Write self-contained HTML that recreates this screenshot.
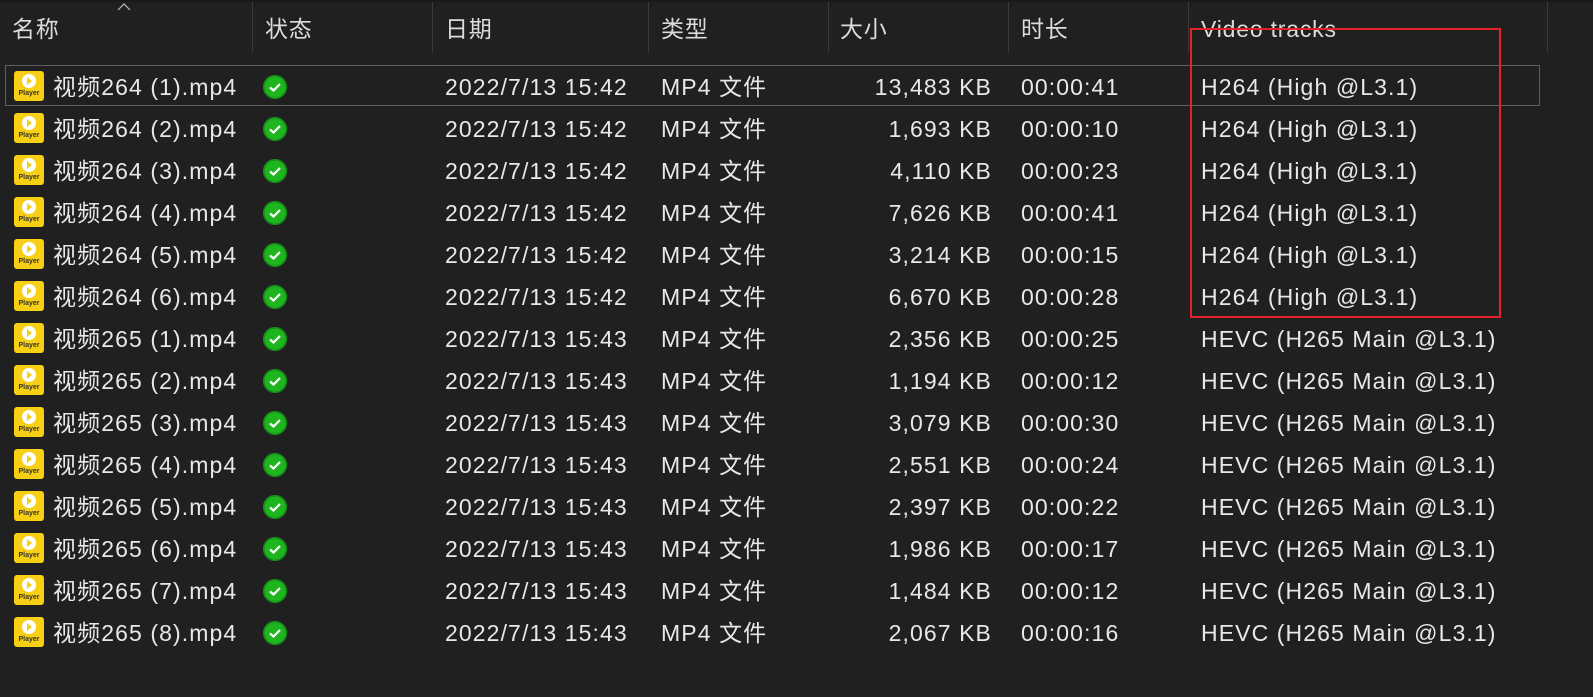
<!DOCTYPE html>
<html><head><meta charset="utf-8"><style>
body{margin:0;width:1593px;height:697px;background:#202020;overflow:hidden;font-family:"Liberation Sans","Noto Sans CJK SC",sans-serif;color:#e8e8e8;font-size:23px;letter-spacing:1.1px;position:relative}
.top{position:absolute;left:0;top:0;width:1593px;height:2px;background:#191919}
.sep{position:absolute;top:2px;height:50px;width:1px;background:#3a3a3a}
.h{position:absolute;top:14px;line-height:30px;font-size:23px;color:#dcdcdc;letter-spacing:0.8px}
.r{position:absolute;left:0;width:1593px;height:42px}
.r div{position:absolute;top:7px;line-height:30px;white-space:nowrap}
.ic{left:14px;top:6px!important;width:30px;height:30px;background:#f7cf14;border-radius:3px}
.ic:before{content:"";position:absolute;left:8px;top:3px;width:14px;height:14px;border-radius:50%;background:#fff}
.ic:after{content:"Player";position:absolute;left:0;width:30px;top:18px;line-height:10px;font-size:7px;letter-spacing:0;font-weight:bold;color:#333;text-align:center;font-family:"Liberation Sans",sans-serif}
.tri{position:absolute;left:13px;top:6px;width:0;height:0;border-left:5px solid #f7cf14;border-top:4px solid transparent;border-bottom:4px solid transparent;z-index:2}
.ck{left:263px;top:10px!important;width:24px;height:24px;border-radius:50%;background:#1fb51f;box-shadow:inset 0 0 0 1.5px #168a16}
.ck svg{position:absolute;left:0;top:0}
.n{left:53px}.d{left:445px}.t{left:661px}.s{right:601px}.u{left:1021px}.v{left:1201px}
.sel{position:absolute;left:5px;top:65px;width:1535px;height:41px;border:1px solid #5f5f5f;box-sizing:border-box}
.red{position:absolute;left:1190px;top:28px;width:311px;height:290px;border:2px solid #e0222a;box-sizing:border-box}
</style></head><body>
<div class="top"></div>
<svg style="position:absolute;left:117px;top:3px" width="14" height="8"><path d="M1 7 L7 1 L13 7" stroke="#bbb" fill="none" stroke-width="1.2"/></svg>
<div class="h" style="left:12px">名称</div>
<div class="h" style="left:265px">状态</div>
<div class="h" style="left:445px">日期</div>
<div class="h" style="left:661px">类型</div>
<div class="h" style="left:840px">大小</div>
<div class="h" style="left:1021px">时长</div>
<div class="h" style="left:1201px">Video tracks</div>
<div class="sep" style="left:252px"></div><div class="sep" style="left:432px"></div><div class="sep" style="left:648px"></div><div class="sep" style="left:828px"></div><div class="sep" style="left:1008px"></div><div class="sep" style="left:1188px"></div><div class="sep" style="left:1547px"></div>
<div class="sel"></div>

<div class="r" style="top:65px"><div class="ic"><span class="tri"></span></div><div class="n">视频264 (1).mp4</div><div class="ck"><svg width="24" height="24"><path d="M7 12.5l3.5 3 6.5-6.5" stroke="#fff" stroke-width="2.2" fill="none"/></svg></div><div class="d">2022/7/13 15:42</div><div class="t">MP4 文件</div><div class="s">13,483 KB</div><div class="u">00:00:41</div><div class="v">H264 (High @L3.1)</div></div>
<div class="r" style="top:107px"><div class="ic"><span class="tri"></span></div><div class="n">视频264 (2).mp4</div><div class="ck"><svg width="24" height="24"><path d="M7 12.5l3.5 3 6.5-6.5" stroke="#fff" stroke-width="2.2" fill="none"/></svg></div><div class="d">2022/7/13 15:42</div><div class="t">MP4 文件</div><div class="s">1,693 KB</div><div class="u">00:00:10</div><div class="v">H264 (High @L3.1)</div></div>
<div class="r" style="top:149px"><div class="ic"><span class="tri"></span></div><div class="n">视频264 (3).mp4</div><div class="ck"><svg width="24" height="24"><path d="M7 12.5l3.5 3 6.5-6.5" stroke="#fff" stroke-width="2.2" fill="none"/></svg></div><div class="d">2022/7/13 15:42</div><div class="t">MP4 文件</div><div class="s">4,110 KB</div><div class="u">00:00:23</div><div class="v">H264 (High @L3.1)</div></div>
<div class="r" style="top:191px"><div class="ic"><span class="tri"></span></div><div class="n">视频264 (4).mp4</div><div class="ck"><svg width="24" height="24"><path d="M7 12.5l3.5 3 6.5-6.5" stroke="#fff" stroke-width="2.2" fill="none"/></svg></div><div class="d">2022/7/13 15:42</div><div class="t">MP4 文件</div><div class="s">7,626 KB</div><div class="u">00:00:41</div><div class="v">H264 (High @L3.1)</div></div>
<div class="r" style="top:233px"><div class="ic"><span class="tri"></span></div><div class="n">视频264 (5).mp4</div><div class="ck"><svg width="24" height="24"><path d="M7 12.5l3.5 3 6.5-6.5" stroke="#fff" stroke-width="2.2" fill="none"/></svg></div><div class="d">2022/7/13 15:42</div><div class="t">MP4 文件</div><div class="s">3,214 KB</div><div class="u">00:00:15</div><div class="v">H264 (High @L3.1)</div></div>
<div class="r" style="top:275px"><div class="ic"><span class="tri"></span></div><div class="n">视频264 (6).mp4</div><div class="ck"><svg width="24" height="24"><path d="M7 12.5l3.5 3 6.5-6.5" stroke="#fff" stroke-width="2.2" fill="none"/></svg></div><div class="d">2022/7/13 15:42</div><div class="t">MP4 文件</div><div class="s">6,670 KB</div><div class="u">00:00:28</div><div class="v">H264 (High @L3.1)</div></div>
<div class="r" style="top:317px"><div class="ic"><span class="tri"></span></div><div class="n">视频265 (1).mp4</div><div class="ck"><svg width="24" height="24"><path d="M7 12.5l3.5 3 6.5-6.5" stroke="#fff" stroke-width="2.2" fill="none"/></svg></div><div class="d">2022/7/13 15:43</div><div class="t">MP4 文件</div><div class="s">2,356 KB</div><div class="u">00:00:25</div><div class="v">HEVC (H265 Main @L3.1)</div></div>
<div class="r" style="top:359px"><div class="ic"><span class="tri"></span></div><div class="n">视频265 (2).mp4</div><div class="ck"><svg width="24" height="24"><path d="M7 12.5l3.5 3 6.5-6.5" stroke="#fff" stroke-width="2.2" fill="none"/></svg></div><div class="d">2022/7/13 15:43</div><div class="t">MP4 文件</div><div class="s">1,194 KB</div><div class="u">00:00:12</div><div class="v">HEVC (H265 Main @L3.1)</div></div>
<div class="r" style="top:401px"><div class="ic"><span class="tri"></span></div><div class="n">视频265 (3).mp4</div><div class="ck"><svg width="24" height="24"><path d="M7 12.5l3.5 3 6.5-6.5" stroke="#fff" stroke-width="2.2" fill="none"/></svg></div><div class="d">2022/7/13 15:43</div><div class="t">MP4 文件</div><div class="s">3,079 KB</div><div class="u">00:00:30</div><div class="v">HEVC (H265 Main @L3.1)</div></div>
<div class="r" style="top:443px"><div class="ic"><span class="tri"></span></div><div class="n">视频265 (4).mp4</div><div class="ck"><svg width="24" height="24"><path d="M7 12.5l3.5 3 6.5-6.5" stroke="#fff" stroke-width="2.2" fill="none"/></svg></div><div class="d">2022/7/13 15:43</div><div class="t">MP4 文件</div><div class="s">2,551 KB</div><div class="u">00:00:24</div><div class="v">HEVC (H265 Main @L3.1)</div></div>
<div class="r" style="top:485px"><div class="ic"><span class="tri"></span></div><div class="n">视频265 (5).mp4</div><div class="ck"><svg width="24" height="24"><path d="M7 12.5l3.5 3 6.5-6.5" stroke="#fff" stroke-width="2.2" fill="none"/></svg></div><div class="d">2022/7/13 15:43</div><div class="t">MP4 文件</div><div class="s">2,397 KB</div><div class="u">00:00:22</div><div class="v">HEVC (H265 Main @L3.1)</div></div>
<div class="r" style="top:527px"><div class="ic"><span class="tri"></span></div><div class="n">视频265 (6).mp4</div><div class="ck"><svg width="24" height="24"><path d="M7 12.5l3.5 3 6.5-6.5" stroke="#fff" stroke-width="2.2" fill="none"/></svg></div><div class="d">2022/7/13 15:43</div><div class="t">MP4 文件</div><div class="s">1,986 KB</div><div class="u">00:00:17</div><div class="v">HEVC (H265 Main @L3.1)</div></div>
<div class="r" style="top:569px"><div class="ic"><span class="tri"></span></div><div class="n">视频265 (7).mp4</div><div class="ck"><svg width="24" height="24"><path d="M7 12.5l3.5 3 6.5-6.5" stroke="#fff" stroke-width="2.2" fill="none"/></svg></div><div class="d">2022/7/13 15:43</div><div class="t">MP4 文件</div><div class="s">1,484 KB</div><div class="u">00:00:12</div><div class="v">HEVC (H265 Main @L3.1)</div></div>
<div class="r" style="top:611px"><div class="ic"><span class="tri"></span></div><div class="n">视频265 (8).mp4</div><div class="ck"><svg width="24" height="24"><path d="M7 12.5l3.5 3 6.5-6.5" stroke="#fff" stroke-width="2.2" fill="none"/></svg></div><div class="d">2022/7/13 15:43</div><div class="t">MP4 文件</div><div class="s">2,067 KB</div><div class="u">00:00:16</div><div class="v">HEVC (H265 Main @L3.1)</div></div>
<div class="red"></div>
</body></html>
